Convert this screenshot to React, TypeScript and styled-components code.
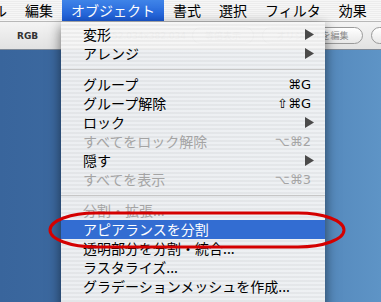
import { FC } from 'react';
import styled, { createGlobalStyle } from 'styled-components';

const GlobalStyle = createGlobalStyle`
  html, body {
    margin: 0;
    padding: 0;
    background: #3b679e;
  }
  body {
    width: 381px;
    height: 302px;
    overflow: hidden;
    font-family: 'Noto Sans CJK JP', 'DejaVu Sans', sans-serif;
  }
`;

type Item =
  | { kind: 'sep' }
  | {
      kind: 'item';
      label: string;
      shortcut?: string;
      submenu?: boolean;
      disabled?: boolean;
      selected?: boolean;
    };

const items: Item[] = [
  { kind: 'item', label: '変形', submenu: true },
  { kind: 'item', label: 'アレンジ', submenu: true },
  { kind: 'sep' },
  { kind: 'item', label: 'グループ', shortcut: '⌘G' },
  { kind: 'item', label: 'グループ解除', shortcut: '⇧⌘G' },
  { kind: 'item', label: 'ロック', submenu: true },
  { kind: 'item', label: 'すべてをロック解除', shortcut: '⌥⌘2', disabled: true },
  { kind: 'item', label: '隠す', submenu: true },
  { kind: 'item', label: 'すべてを表示', shortcut: '⌥⌘3', disabled: true },
  { kind: 'sep' },
  { kind: 'item', label: '分割・拡張...', disabled: true },
  { kind: 'item', label: 'アピアランスを分割', selected: true },
  { kind: 'item', label: '透明部分を分割・統合...' },
  { kind: 'item', label: 'ラスタライズ...' },
  { kind: 'item', label: 'グラデーションメッシュを作成...' },
];

const titles = ['ファイル', '編集', 'オブジェクト', '書式', '選択', 'フィルタ', '効果'];

const App: FC = () => {
  return (
    <Screen>
      <GlobalStyle />
      <MenuBar>
        {titles.map((t, i) => (
          <MenuTitle key={t} $active={i === 2} $clipped={i === 0}>
            {t}
          </MenuTitle>
        ))}
      </MenuBar>
      <Workspace>
        <Toolbar>
          <ModeLabel>RGB</ModeLabel>
          <SizeText>52.034x382.034</SizeText>
          <Pill $width={62}>等倍表示</Pill>
          <Pill $width={101}>オリジナルを編集</Pill>
          <Pill $width={40}>書出</Pill>
        </Toolbar>
        <Desktop />
      </Workspace>

      <DropMenu>
        {items.map((it, i) =>
          it.kind === 'sep' ? (
            <Separator key={i} />
          ) : (
            <Row key={i} $disabled={it.disabled} $selected={it.selected}>
              <span>{it.label}</span>
              {it.shortcut && <Shortcut>{it.shortcut}</Shortcut>}
              {it.submenu && (
                <svg width="9" height="11" viewBox="0 0 9 11">
                  <path d="M0 0 L9 5.5 L0 11 Z" fill="#4a4a4a" />
                </svg>
              )}
            </Row>
          )
        )}
      </DropMenu>

      <Annotation width="298" height="38" viewBox="0 0 298 38">
        <rect
          x="2"
          y="2"
          width="294"
          height="34"
          rx="46"
          ry="17"
          fill="none"
          stroke="#d40000"
          strokeWidth="3"
        />
      </Annotation>
    </Screen>
  );
};

const Screen = styled.div`
  position: relative;
  width: 381px;
  height: 302px;
  overflow: hidden;
  display: flex;
  flex-flow: column;
`;

const MenuBar = styled.div`
  height: 22px;
  display: flex;
  flex-flow: row;
  align-items: stretch;
  background: repeating-linear-gradient(#f6f6f6 0 1px, #ececec 1px 2px);
  border-bottom: 1px solid #b8b8b8;
  box-sizing: border-box;
  flex-shrink: 0;
`;

const MenuTitle = styled.div<{ $active?: boolean; $clipped?: boolean }>`
  padding: 0 9px;
  margin-left: ${p => (p.$clipped ? '-58px' : '0')};
  font-size: 14px;
  line-height: 21px;
  white-space: nowrap;
  color: ${p => (p.$active ? '#fff' : '#000')};
  background: ${p => (p.$active ? 'linear-gradient(#3f84e8, #1a59d4)' : 'transparent')};
`;

const Workspace = styled.div`
  flex: 1;
  display: flex;
  flex-flow: column;
`;

const Toolbar = styled.div`
  height: 27px;
  display: flex;
  flex-flow: row;
  align-items: center;
  padding-left: 17px;
  gap: 8px;
  background: linear-gradient(#f4f4f4, #e2e2e2);
  border-bottom: 1px solid #7f8a98;
  flex-shrink: 0;
  overflow: hidden;
`;

const ModeLabel = styled.span`
  width: 87px;
  flex-shrink: 0;
  font-family: 'DejaVu Sans', sans-serif;
  font-size: 9px;
  font-weight: bold;
  color: #333;
`;

const SizeText = styled.span`
  width: 72px;
  flex-shrink: 0;
  font-family: 'DejaVu Sans', sans-serif;
  font-size: 9px;
  color: #8c8c8c;
`;

const Pill = styled.span<{ $width: number }>`
  width: ${p => p.$width}px;
  height: 17px;
  flex-shrink: 0;
  box-sizing: border-box;
  border: 1px solid #9a9a9a;
  border-radius: 9px;
  background: linear-gradient(#ffffff, #e8e8e8);
  font-size: 9px;
  line-height: 15px;
  text-align: center;
  color: #8a8a8a;
  white-space: nowrap;
  overflow: hidden;
`;

const Desktop = styled.div`
  flex: 1;
  background: linear-gradient(90deg, #39659c 0%, #4170a6 50%, #5e94c6 100%);
`;

const DropMenu = styled.div`
  position: absolute;
  left: 61px;
  top: 22px;
  width: 264px;
  bottom: -20px;
  padding-top: 3px;
  box-sizing: border-box;
  background: repeating-linear-gradient(rgba(246, 246, 246, 0.95) 0 2px, rgba(236, 236, 236, 0.95) 2px 4px);
  box-shadow: 0 4px 12px rgba(0, 0, 0, 0.55);
`;

const Row = styled.div<{ $disabled?: boolean; $selected?: boolean }>`
  height: 19px;
  display: flex;
  flex-flow: row;
  align-items: center;
  justify-content: space-between;
  padding: 0 11px 0 22px;
  font-size: 14px;
  line-height: 19px;
  white-space: nowrap;
  color: ${p => (p.$selected ? '#fff' : p.$disabled ? '#a4a4a4' : '#000')};
  background: ${p => (p.$selected ? '#336dd2' : 'transparent')};
`;

const Shortcut = styled.span`
  font-family: 'DejaVu Sans', sans-serif;
  font-size: 13px;
  padding-right: 3px;
`;

const Separator = styled.div`
  height: 12px;
  display: flex;
  align-items: center;
  &::after {
    content: '';
    flex: 1;
    height: 1px;
    background: #c6c6c6;
  }
`;

const Annotation = styled.svg`
  position: absolute;
  left: 48px;
  top: 211px;
`;

export default App;
